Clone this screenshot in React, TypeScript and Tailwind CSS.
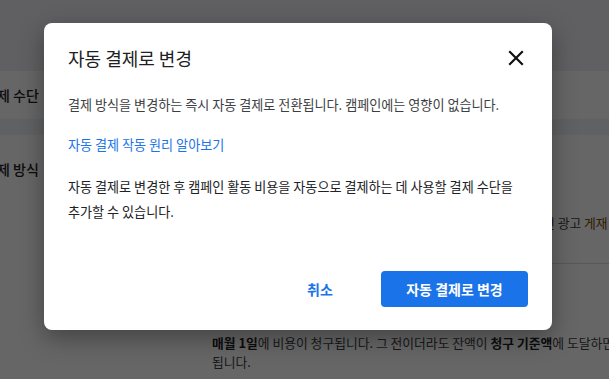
import React from 'react';

const font = { fontFamily: '"Noto Sans CJK KR", "Noto Sans", sans-serif' };

const CloseIcon = () => (
  <svg width="16" height="16" viewBox="0 0 16 16" fill="none">
    <path d="M2 2 L14 14 M14 2 L2 14" stroke="#111" strokeWidth="2.2" strokeLinecap="square" />
  </svg>
);

const App: React.FC = () => {
  return (
    <div className="relative w-[609px] h-[379px] overflow-hidden bg-white text-[#202124]" style={font}>
      {/* page underneath */}
      <div className="flex flex-col h-full">
        <div className="h-[71px] bg-[#eff0f4]" />
        <div className="h-[48px] flex items-center -ml-[3px] text-[14px] font-medium">제 수단</div>
        <div className="h-[16px] bg-[#f1f3f4]" />
        <div className="h-[128px] relative">
          <div className="absolute left-[-3px] top-[24px] text-[14px] font-medium">제 방식</div>
          <div className="absolute left-[543px] top-[78px] text-[12.8px] whitespace-nowrap text-[#3c4043]">
            면 광고 <span className="text-[#7a4a00]">게재</span>
          </div>
        </div>
        <div className="ml-[190px] border-t border-[#dadce0]" />
        <div className="ml-[212px] mt-[69px] text-[12.8px] leading-[19px] text-[#3c4043] whitespace-nowrap">
          <div>
            <b className="text-[#202124]">매월 1일</b>에 비용이 청구됩니다. 그 전이더라도 잔액이 <b className="text-[#202124]">청구 기준액</b>에 도달하면 청구
          </div>
          <div>됩니다.</div>
        </div>
      </div>

      {/* overlay */}
      <div className="absolute inset-0 bg-black/60" />

      {/* dialog */}
      <div className="absolute left-[44px] top-[23px] w-[508px] h-[307px] bg-white rounded-[8px] shadow-[0_8px_24px_rgba(0,0,0,0.35)] flex flex-col pl-[24px] pr-[24px]">
        <div className="flex items-center justify-between h-[28px] mt-[21px]">
          <h2 className="text-[18px] leading-[28px] text-[#202124]">자동 결제로 변경</h2>
          <button className="mr-[4px] flex items-center">
            <CloseIcon />
          </button>
        </div>
        <p className="mt-[23px] text-[13.1px] leading-[20px] text-[#3c4043]">
          결제 방식을 변경하는 즉시 자동 결제로 전환됩니다. 캠페인에는 영향이 없습니다.
        </p>
        <a className="mt-[20px] text-[13.1px] leading-[20px] text-[#1a73e8]">자동 결제 작동 원리 알아보기</a>
        <p className="mt-[19px] text-[13.1px] leading-[25px] text-[#202124]">
          자동 결제로 변경한 후 캠페인 활동 비용을 자동으로 결제하는 데 사용할 결제 수단을
          <br />
          추가할 수 있습니다.
        </p>
        <div className="mt-auto mb-[23px] flex items-center justify-end gap-[34px]">
          <button className="w-[54px] h-[36px] text-[14px] font-bold text-[#1a73e8]">취소</button>
          <button className="w-[147px] h-[36px] rounded-[4px] bg-[#1a73e8] text-white text-[14px] font-bold">
            자동 결제로 변경
          </button>
        </div>
      </div>
    </div>
  );
};

export default App;
